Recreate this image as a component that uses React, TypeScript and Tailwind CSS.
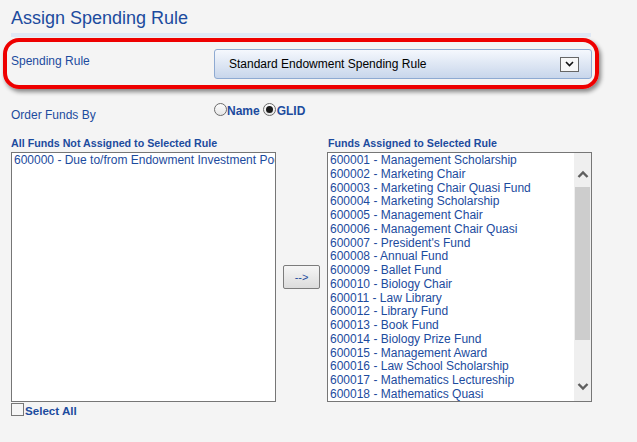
import React from "react";

const BLUE = "text-[#1c4b9e]";

const assigned = [
  "600001 - Management Scholarship",
  "600002 - Marketing Chair",
  "600003 - Marketing Chair Quasi Fund",
  "600004 - Marketing Scholarship",
  "600005 - Management Chair",
  "600006 - Management Chair Quasi",
  "600007 - President's Fund",
  "600008 - Annual Fund",
  "600009 - Ballet Fund",
  "600010 - Biology Chair",
  "600011 - Law Library",
  "600012 - Library Fund",
  "600013 - Book Fund",
  "600014 - Biology Prize Fund",
  "600015 - Management Award",
  "600016 - Law School Scholarship",
  "600017 - Mathematics Lectureship",
  "600018 - Mathematics Quasi",
];

function Radio({ checked }: { checked?: boolean }) {
  return (
    <span className="mt-[-1px] flex h-[13px] w-[13px] shrink-0 items-center justify-center rounded-full border border-[#6b6b6b] bg-gradient-to-b from-[#fdfdfd] to-[#e6e6e6]">
      {checked && <span className="h-[7px] w-[7px] rounded-full bg-[#1a1a1a]" />}
    </span>
  );
}

function Chevron({ dir, className }: { dir: "up" | "down"; className?: string }) {
  return (
    <svg width="12" height="8" viewBox="0 0 12 8" className={className}>
      <path
        d={dir === "up" ? "M1.5 7 L6 2.5 L10.5 7" : "M1.5 1 L6 5.5 L10.5 1"}
        fill="none"
        stroke="#5f5f5f"
        strokeWidth="2.4"
      />
    </svg>
  );
}

export default function App() {
  return (
    <div
      className="h-[442px] w-[637px] overflow-hidden bg-[#f4f4f4]"
      style={{ fontFamily: '"Liberation Sans", Arial, sans-serif' }}
    >
      <div className={`pl-[11px] pt-[7px] text-[18px] leading-[22px] ${BLUE}`}>Assign Spending Rule</div>

      <div className="ml-[11px] mt-[4px] h-[4px] w-[580px] bg-[#dfe8f5]" />

      <div className="ml-[3px] mt-[1px] flex h-[51px] w-[596px] items-start rounded-[16px] border-[4px] border-[#ee0000] pl-[4px] shadow-[2px_3px_4px_rgba(0,0,0,0.45)]">
        <div className={`mt-[12px] w-[203px] text-[12px] leading-[14px] ${BLUE}`}>Spending Rule</div>
        <div className="mt-[7px] flex h-[30px] w-[378px] items-center justify-between rounded-[3px] border border-[#8eaad2] bg-gradient-to-b from-[#f5f8fd] to-[#c8d6eb] pl-[14px] pr-[12px]">
          <span className="text-[12px] leading-[14px] text-black">Standard Endowment Spending Rule</span>
          <span className="flex h-[15px] w-[19px] items-center justify-center border border-[#666] bg-[#f7f7f7]">
            <svg width="9" height="6" viewBox="0 0 9 6">
              <path d="M1 1 L4.5 4.5 L8 1" fill="none" stroke="#111" strokeWidth="1.6" />
            </svg>
          </span>
        </div>
      </div>

      <div className="mt-[14px] flex items-start pl-[11px]">
        <div className={`mt-[5px] w-[203px] text-[12px] leading-[14px] ${BLUE}`}>Order Funds By</div>
        <div className={`mt-[1px] flex items-start text-[12px] font-bold leading-[14px] ${BLUE}`}>
          <Radio />
          <span className="ml-[0px]">Name</span>
          <span className="ml-[3px]">
            <Radio checked />
          </span>
          <span className="ml-[1px]">GLID</span>
        </div>
      </div>

      <div className={`mt-[15px] flex pl-[11px] text-[10.7px] font-bold leading-[12px] ${BLUE}`}>
        <div className="w-[317px]">All Funds Not Assigned to Selected Rule</div>
        <div>Funds Assigned to Selected Rule</div>
      </div>

      <div className="mt-[3px] flex items-center pl-[11px]">
        <div className="h-[250px] w-[265px] overflow-hidden border border-[#767676] bg-white">
          <div className={`whitespace-nowrap pl-[2px] pt-[1px] text-[12px] leading-[13.75px] ${BLUE}`}>
            600000 - Due to/from Endowment Investment Pool
          </div>
        </div>
        <div className="ml-[7px] flex h-[24px] w-[37px] items-center justify-center rounded-[2px] border border-[#7c7c7c] bg-gradient-to-b from-[#f6f6f6] to-[#dcdcdc]">
          <span className={`text-[11px] leading-[12px] ${BLUE}`}>--&gt;</span>
        </div>
        <div className="ml-[7px] flex h-[250px] w-[265px] overflow-hidden border border-[#767676] bg-white">
          <div className={`min-w-0 flex-1 overflow-hidden whitespace-nowrap pl-[2px] pt-[1px] text-[12px] leading-[13.75px] ${BLUE}`}>
            {assigned.map((a) => (
              <div key={a}>{a}</div>
            ))}
          </div>
          <div className="flex w-[17px] flex-col bg-[#efefef]">
            <div className="flex h-[34px] items-start justify-center pt-[17px]">
              <Chevron dir="up" />
            </div>
            <div className="mx-[1px] h-[153px] bg-[#cdcdcd]" />
            <div className="flex-1" />
            <div className="flex h-[40px] items-start justify-center pt-[22px]">
              <Chevron dir="down" />
            </div>
          </div>
        </div>
      </div>

      <div className="mt-[1px] flex items-start pl-[11px]">
        <span className="h-[13px] w-[13px] border border-[#777] bg-[#f6f6f6]" />
        <span className={`ml-[1px] mt-[1px] text-[11.6px] font-bold leading-[14px] ${BLUE}`}>Select All</span>
      </div>
    </div>
  );
}
